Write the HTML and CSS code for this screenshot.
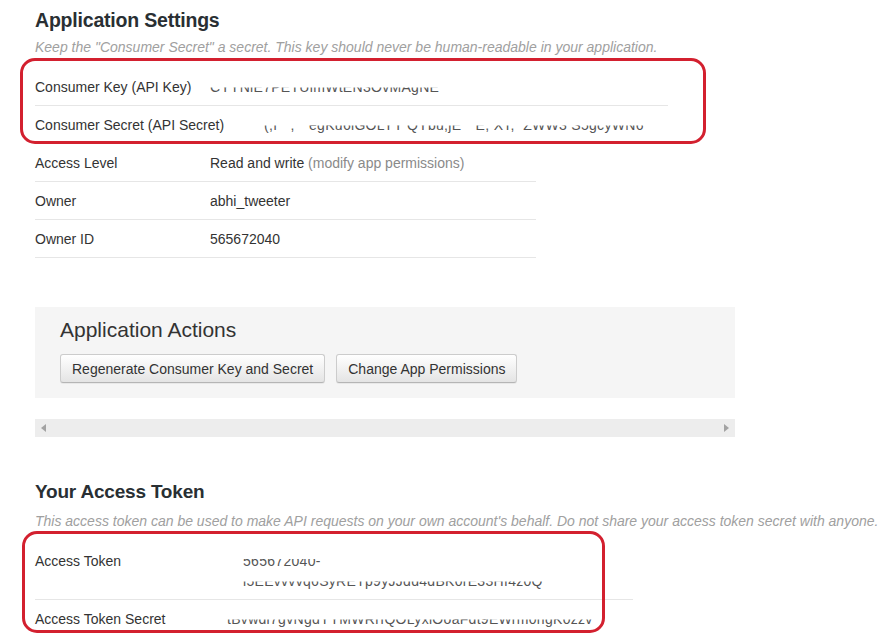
FILE: index.html
```html
<!DOCTYPE html>
<html>
<head>
<meta charset="utf-8">
<link rel="stylesheet" href="styles.css">
</head>
<body>
<div class="page">
  <section class="settings">
    <h1 class="title">Application Settings</h1>
    <p class="note">Keep the "Consumer Secret" a secret. This key should never be human-readable in your application.</p>
    <div class="table-wrap">
      <div class="kv kv-wide">
        <div class="row"><span class="label">Consumer Key (API Key)</span><span class="value"><span class="mask">CYYNlE7PETUlmWtEN3OvMAgNE</span></span></div>
        <div class="row"><span class="label">Consumer Secret (API Secret)</span><span class="value"><span class="mask shift">(,f''' ,  ''egKu6lGOLYY QYbu,jE '' E, XT,  ZWW3 S5gcyWN6</span></span></div>
      </div>
      <div class="kv kv-narrow">
        <div class="row"><span class="label">Access Level</span><span class="value">Read and write <span class="muted">(modify app permissions)</span></span></div>
        <div class="row"><span class="label">Owner</span><span class="value">abhi_tweeter</span></div>
        <div class="row"><span class="label">Owner ID</span><span class="value">565672040</span></div>
      </div>
      <div class="marker marker-one"></div>
    </div>
  </section>

  <section class="actions">
    <h2 class="actions-title">Application Actions</h2>
    <div class="buttons">
      <button class="btn">Regenerate Consumer Key and Secret</button>
      <button class="btn">Change App Permissions</button>
    </div>
  </section>

  <div class="hscroll">
    <span class="arrow arrow-left"></span>
    <span class="arrow arrow-right"></span>
  </div>

  <section class="token">
    <h1 class="title title-token">Your Access Token</h1>
    <p class="note note-token">This access token can be used to make API requests on your own account's behalf. Do not share your access token secret with anyone.</p>
    <div class="table-wrap">
      <div class="kv kv-token">
        <div class="row"><span class="label label-token">Access Token</span><span class="value"><span class="mask mask-light">565672040-</span><br><span class="mask">i5EEvvvvq6SyRETp9yJJdd4dBK0rE33Hf4z0Q</span></span></div>
        <div class="row"><span class="label label-token">Access Token Secret</span><span class="value"><span class="mask pull">tBvwdl7gvNgdYYMWRrfQOLyxiOoaFdt9EWrm0ngK0zzv</span></span></div>
      </div>
      <div class="marker marker-two"></div>
    </div>
  </section>
</div>
</body>
</html>
```

FILE: styles.css
```css
* { box-sizing: border-box; }

html, body {
  margin: 0;
  padding: 0;
  background: #ffffff;
}

body {
  font-family: "Liberation Sans", Arial, sans-serif;
  color: #333333;
}

.page {
  padding: 8px 0 0 35px;
  width: 891px;
}

.title {
  margin: 0;
  font-size: 19.5px;
  line-height: 24px;
  font-weight: bold;
  color: #292f33;
  letter-spacing: -0.2px;
}

.title-token {
  font-size: 19px;
  margin-top: 43px;
}

.note {
  margin: 6px 0 0 0;
  font-size: 14px;
  line-height: 18px;
  font-style: italic;
  color: #a0a0a0;
  white-space: nowrap;
}

.note-token {
  margin-top: 8px;
}

.table-wrap {
  position: relative;
  margin-top: 12px;
}

.kv {
  display: flex;
  flex-direction: column;
}

.kv-wide { width: 633px; }
.kv-narrow { width: 501px; }
.kv-token { width: 598px; }

.row {
  display: flex;
  padding: 9px 0 8px 0;
  border-bottom: 1px solid #e6e6e6;
  font-size: 14px;
  line-height: 20px;
  color: #333333;
}

.label {
  flex: 0 0 175px;
  white-space: nowrap;
}

.label-token {
  flex-basis: 208px;
}

.value {
  white-space: nowrap;
}

.muted {
  color: #8a8a8a;
}

.mask {
  display: inline-block;
  clip-path: inset(52% 0 0 0);
  color: #555555;
  white-space: pre;
  letter-spacing: 0.3px;
}

.mask-light {
  clip-path: inset(40% 0 0 0);
}

.shift {
  margin-left: 40px;
}

.pull {
  margin-left: -16px;
}

.marker {
  position: absolute;
  border: 3px solid #d3202f;
  border-radius: 15px;
  pointer-events: none;
}

.marker-one {
  left: -15px;
  top: -10px;
  width: 686px;
  height: 86px;
}

.marker-two {
  left: -13px;
  top: -11px;
  width: 583px;
  height: 102px;
}

.actions {
  margin-top: 49px;
  width: 700px;
  height: 91px;
  padding: 11px 0 0 25px;
  background: #f5f5f5;
}

.actions-title {
  margin: 0;
  font-size: 21px;
  line-height: 24px;
  font-weight: normal;
  color: #333333;
}

.buttons {
  display: flex;
  gap: 11px;
  margin-top: 12px;
}

.btn {
  height: 29px;
  padding: 0 11px;
  font-family: "Liberation Sans", Arial, sans-serif;
  font-size: 14px;
  color: #333333;
  background: linear-gradient(#ffffff, #e4e4e4);
  border: 1px solid #cccccc;
  border-bottom-color: #b5b5b5;
  border-radius: 3px;
  box-shadow: 0 1px 0 rgba(0, 0, 0, 0.05);
}

.hscroll {
  position: relative;
  margin-top: 21px;
  width: 700px;
  height: 18px;
  background: #ededed;
}

.arrow {
  position: absolute;
  top: 5px;
  width: 0;
  height: 0;
  border-top: 4px solid transparent;
  border-bottom: 4px solid transparent;
}

.arrow-left {
  left: 6px;
  border-right: 5px solid #a3a3a3;
}

.arrow-right {
  right: 6px;
  border-left: 5px solid #a3a3a3;
}
```
